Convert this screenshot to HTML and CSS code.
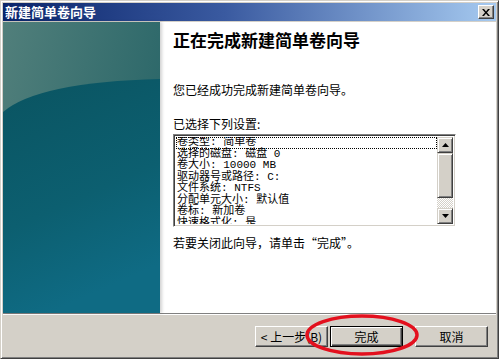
FILE: index.html
```html
<!DOCTYPE html>
<html lang="zh">
<head>
    <meta charset="UTF-8">
    <title>新建简单卷向导</title>
    <link rel="stylesheet" href="styles.css">
</head>
<body>
    <div class="window">
        <div class="titlebar">
            <span class="title">新建简单卷向导</span>
            <span class="close">
                <svg width="8" height="7" viewBox="0 0 8 7"><path d="M0 0h2l2 2.5L6 0h2L5 3.5 8 7H6L4 4.5 2 7H0l3-3.5z" fill="#000"/></svg>
            </span>
        </div>

        <div class="main">
            <!-- 左侧图片 -->
            <div class="side">
                <svg width="157" height="291" viewBox="0 0 157 291">
                    <defs>
                        <linearGradient id="topGrad" x1="0" y1="0" x2="1" y2="0.4">
                            <stop offset="0" stop-color="#517f7b"/>
                            <stop offset="1" stop-color="#2b6769"/>
                        </linearGradient>
                        <linearGradient id="darkGrad" x1="0" y1="0" x2="0.3" y2="1">
                            <stop offset="0" stop-color="#0a5461"/>
                            <stop offset="0.6" stop-color="#0c5f70"/>
                            <stop offset="1" stop-color="#0f6b84"/>
                        </linearGradient>
                    </defs>
                    <rect width="157" height="291" fill="url(#topGrad)"/>
                    <path d="M0 90 Q35 60 157 57 L157 291 L0 291 Z" fill="url(#darkGrad)"/>
                </svg>
            </div>

            <div class="content">
                <h1>正在完成新建简单卷向导</h1>
                <p class="intro">您已经成功完成新建简单卷向导。</p>
                <p class="label">已选择下列设置:</p>
                <div class="listbox">
                    <ul class="items">
                        <li class="focused">卷类型: 简单卷</li>
                        <li>选择的磁盘: 磁盘 0</li>
                        <li>卷大小: 10000 MB</li>
                        <li>驱动器号或路径: C:</li>
                        <li>文件系统: NTFS</li>
                        <li>分配单元大小: 默认值</li>
                        <li>卷标: 新加卷</li>
                        <li>快速格式化: 是</li>
                    </ul>
                    <div class="scrollbar">
                        <div class="scroll-btn">
                            <svg width="7" height="4" viewBox="0 0 7 4"><path d="M3.5 0L7 4H0z" fill="#000"/></svg>
                        </div>
                        <div class="thumb"></div>
                        <div class="track"></div>
                        <div class="scroll-btn">
                            <svg width="7" height="4" viewBox="0 0 7 4"><path d="M0 0h7L3.5 4z" fill="#000"/></svg>
                        </div>
                    </div>
                </div>
                <p class="hint">若要关闭此向导，请单击“完成”。</p>
            </div>
        </div>

        <div class="footer">
            <button class="btn">&lt; 上一步(B)</button>
            <button class="btn default">完成</button>
            <button class="btn cancel">取消</button>
        </div>

        <!-- 红色圈注 -->
        <svg class="mark" width="120" height="46" viewBox="0 0 120 46">
            <ellipse cx="60" cy="23" rx="55" ry="19" fill="none" stroke="#e3101e" stroke-width="3.5"/>
        </svg>
    </div>
</body>
</html>
```

FILE: styles.css
```css
* {
    margin: 0;
    padding: 0;
    box-sizing: border-box;
}

body {
    font-family: "Noto Sans CJK SC", "Liberation Sans", sans-serif;
    font-size: 12px;
    color: #000;
    background: #fff;
}

.window {
    position: relative;
    width: 499px;
    height: 359px;
    display: flex;
    flex-direction: column;
    background: #d4d0c8;
    border: 1px solid;
    border-color: #d4d0c8 #404040 #404040 #d4d0c8;
    box-shadow: inset 1px 1px #fff, inset -1px -1px #808080;
    padding: 2px;
}

/* 标题栏 */
.titlebar {
    height: 18px;
    display: flex;
    align-items: center;
    justify-content: space-between;
    padding: 0 2px 0 2px;
    background: linear-gradient(to right, #0a246a, #3a5aa0 45%, #a6caf0);
}

.title {
    color: #fff;
    font-weight: bold;
    font-size: 13px;
    line-height: 18px;
}

.close {
    width: 16px;
    height: 14px;
    display: flex;
    align-items: center;
    justify-content: center;
    background: #d4d0c8;
    border: 1px solid;
    border-color: #fff #404040 #404040 #fff;
    box-shadow: inset -1px -1px #808080;
}

.main {
    display: flex;
    height: 291px;
    margin-top: 1px;
}

.side {
    width: 157px;
    flex: none;
    line-height: 0;
    box-shadow: 2px 0 3px rgba(0,0,0,0.18);
    position: relative;
}

.content {
    flex: 1;
    background: #fff;
    padding: 7px 0 0 13px;
}

h1 {
    font-size: 17px;
    font-weight: bold;
    line-height: 22px;
}

.intro {
    margin-top: 31px;
    line-height: 16px;
}

.label {
    margin-top: 18px;
    line-height: 16px;
}

/* 列表框 */
.listbox {
    margin-top: 2px;
    width: 283px;
    height: 93px;
    display: flex;
    border: 1px solid;
    border-color: #808080 #fff #fff #808080;
    box-shadow: inset 1px 1px #404040, inset -1px -1px #d4d0c8;
    padding: 2px;
    overflow: hidden;
}

.items {
    list-style: none;
    flex: 1;
    overflow: hidden;
    font-family: "Liberation Mono", "Noto Sans CJK SC", monospace;
    font-size: 11px;
    line-height: 11.5px;
}

.items li {
    padding-left: 1px;
    white-space: nowrap;
    height: 11.5px;
}

.items .focused {
    outline: 1px dotted #000;
    outline-offset: -1px;
}

.scrollbar {
    width: 16px;
    flex: none;
    display: flex;
    flex-direction: column;
}

.scroll-btn,
.thumb {
    background: #d4d0c8;
    border: 1px solid;
    border-color: #d4d0c8 #404040 #404040 #d4d0c8;
    box-shadow: inset 1px 1px #fff, inset -1px -1px #808080;
}

.scroll-btn {
    height: 16px;
    display: flex;
    align-items: center;
    justify-content: center;
}

.thumb {
    height: 45px;
}

.track {
    flex: 1;
    background: repeating-conic-gradient(#fff 0 25%, #d4d0c8 0 50%) 0 0 / 2px 2px;
}

.hint {
    margin-top: 8px;
    line-height: 16px;
}

/* 底部按钮 */
.footer {
    border-top: 1px solid #808080;
    box-shadow: inset 0 1px #fff;
    flex: 1;
    display: flex;
    justify-content: flex-end;
    align-items: flex-start;
    padding: 12px 8px 0 0;
}

.btn {
    width: 73px;
    height: 21px;
    font-family: "Noto Sans CJK SC", "Liberation Sans", sans-serif;
    font-size: 12px;
    line-height: 17px;
    background: #d4d0c8;
    color: #000;
    border: 1px solid;
    border-color: #fff #404040 #404040 #fff;
    box-shadow: inset -1px -1px #808080;
}

.btn.default {
    margin-left: 2px;
    border-color: #000;
    box-shadow: inset 1px 1px #fff, inset -1px -1px #404040, inset -2px -2px #808080;
}

.btn.cancel {
    margin-left: 12px;
}

.mark {
    position: absolute;
    left: 301px;
    top: 311px;
}
```
